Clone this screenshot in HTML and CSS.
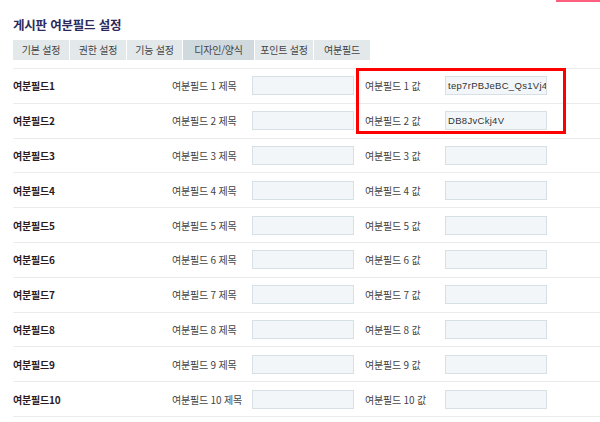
FILE: index.html
```html
<!DOCTYPE html>
<html lang="ko">
<head>
<meta charset="utf-8">
<link rel="stylesheet" href="styles.css">
</head>
<body>
<div class="topbar"><div class="pink"></div></div>
<div class="page">
  <h1 class="title">게시판 여분필드 설정</h1>
  <div class="tabs">
    <div class="tab t1">기본 설정</div>
    <div class="tab t2">권한 설정</div>
    <div class="tab t3">기능 설정</div>
    <div class="tab t4 active">디자인/양식</div>
    <div class="tab t5">포인트 설정</div>
    <div class="tab t6">여분필드</div>
  </div>
  <div class="rows">
    <div class="row"><div class="name">여분필드1</div><div class="lbl">여분필드 1 제목</div><div class="inp"></div><div class="lbl2">여분필드 1 값</div><div class="inp">tep7rPBJeBC_Qs1Vj4</div></div>
    <div class="row"><div class="name">여분필드2</div><div class="lbl">여분필드 2 제목</div><div class="inp"></div><div class="lbl2">여분필드 2 값</div><div class="inp">DB8JvCkj4V</div></div>
    <div class="row"><div class="name">여분필드3</div><div class="lbl">여분필드 3 제목</div><div class="inp"></div><div class="lbl2">여분필드 3 값</div><div class="inp"></div></div>
    <div class="row"><div class="name">여분필드4</div><div class="lbl">여분필드 4 제목</div><div class="inp"></div><div class="lbl2">여분필드 4 값</div><div class="inp"></div></div>
    <div class="row"><div class="name">여분필드5</div><div class="lbl">여분필드 5 제목</div><div class="inp"></div><div class="lbl2">여분필드 5 값</div><div class="inp"></div></div>
    <div class="row"><div class="name">여분필드6</div><div class="lbl">여분필드 6 제목</div><div class="inp"></div><div class="lbl2">여분필드 6 값</div><div class="inp"></div></div>
    <div class="row"><div class="name">여분필드7</div><div class="lbl">여분필드 7 제목</div><div class="inp"></div><div class="lbl2">여분필드 7 값</div><div class="inp"></div></div>
    <div class="row"><div class="name">여분필드8</div><div class="lbl">여분필드 8 제목</div><div class="inp"></div><div class="lbl2">여분필드 8 값</div><div class="inp"></div></div>
    <div class="row"><div class="name">여분필드9</div><div class="lbl">여분필드 9 제목</div><div class="inp"></div><div class="lbl2">여분필드 9 값</div><div class="inp"></div></div>
    <div class="row"><div class="name">여분필드10</div><div class="lbl">여분필드 10 제목</div><div class="inp"></div><div class="lbl2">여분필드 10 값</div><div class="inp"></div></div>
    <div class="highlight"></div>
  </div>
</div>
</body>
</html>
```
FILE: styles.css
```css
html, body {
  margin: 0;
  padding: 0;
  background: #fff;
  font-family: "Noto Sans CJK KR", "Noto Sans", sans-serif;
  color: #444;
  width: 600px;
  height: 422px;
  overflow: hidden;
}
.topbar {
  display: flex;
  justify-content: flex-end;
  height: 2px;
}
.pink {
  width: 44px;
  height: 2px;
  background: #ff5f7f;
}
.page {
  padding-left: 13px;
}
.title {
  margin: 0;
  padding-top: 15px;
  height: 23px;
  line-height: 16px;
  font-size: 12.5px;
  font-weight: bold;
  color: #2c2a5c;
  letter-spacing: -0.2px;
}
.tabs {
  display: flex;
  gap: 1px;
  height: 20px;
  margin-bottom: 8px;
}
.tab {
  background: #e3e8eb;
  font-size: 10px;
  line-height: 20px;
  text-align: center;
  color: #444;
  letter-spacing: -0.2px;
}
.tab.active { background: #d0d9de; }
.t1 { width: 56px; }
.t2 { width: 56px; }
.t3 { width: 55px; }
.t4 { width: 71px; }
.t5 { width: 58px; }
.t6 { width: 56px; }
.rows {
  position: relative;
  border-top: 1px solid #ececec;
}
.row {
  display: flex;
  align-items: center;
  height: 34.8px;
  box-sizing: border-box;
  border-bottom: 1px solid #ececec;
  font-size: 10px;
  letter-spacing: -0.2px;
}
.name {
  width: 159px;
  font-weight: bold;
  color: #2a1a1e;
}
.lbl {
  width: 80px;
}
.lbl2 {
  width: 80px;
  margin-left: 11px;
}
.inp {
  width: 102px;
  height: 19px;
  box-sizing: border-box;
  background: #f2f6f8;
  border: 1px solid #d6e0e5;
  font-family: "Liberation Sans", sans-serif;
  font-size: 9.5px;
  letter-spacing: 0.3px;
  line-height: 17px;
  padding-left: 2px;
  color: #333;
  white-space: nowrap;
  overflow: hidden;
}
.highlight {
  position: absolute;
  left: 343px;
  top: -1px;
  width: 210px;
  height: 66px;
  box-sizing: border-box;
  border: 3px solid #f00;
}
```
